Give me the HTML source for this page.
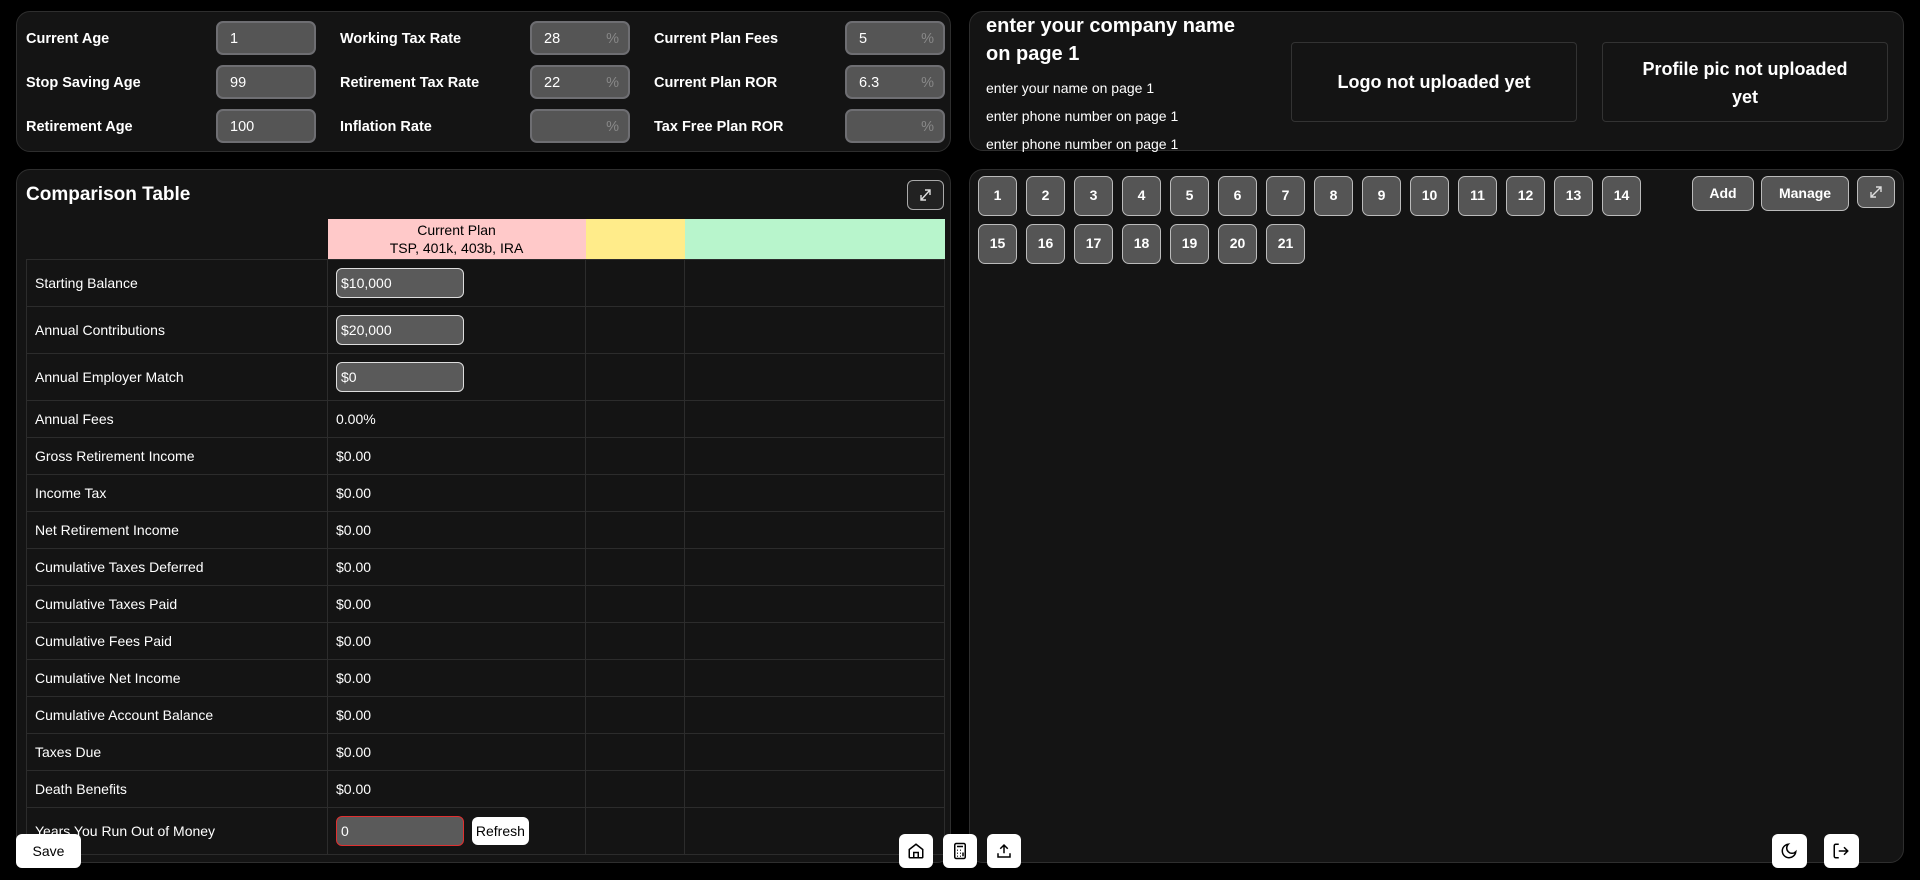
<!DOCTYPE html>
<html><head><meta charset="utf-8">
<style>
*{box-sizing:border-box;margin:0;padding:0}
html,body{width:1920px;height:880px;background:#000;overflow:hidden;font-family:"Liberation Sans",Arial,sans-serif;color:#fff}
.panel{position:absolute;background:#141414;border:1px solid #2e2e2e;border-radius:14px}
.lbl{position:absolute;font-size:14.5px;font-weight:bold}
.inp{position:absolute;width:100px;height:34px;background:#555;border:2px solid #6e6e72;border-radius:7px;font-size:14.5px;padding:8px 0 0 12px}
.inp .p{position:absolute;right:9px;top:8px;color:#888}
table{position:absolute;left:9px;top:49px;border-collapse:collapse;font-size:14px;table-layout:fixed;width:918px}
td{border:1px solid #2c2c2c;padding:0 0 0 8px;height:37px}
tr.tall td{height:47px}
.tin{width:128px;height:30px;background:#5a5a5a;border:1.5px solid #ddd;border-radius:6px;padding:6px 4px;font-size:14px}
.num{position:absolute;width:39px;height:40px;background:#555;border:1.5px solid #bbb;border-radius:7px;font-size:14px;font-weight:bold;text-align:center;line-height:37px}
.wb{position:absolute;background:#fff;border-radius:6px;color:#000}
.wb svg{position:absolute;left:8px;top:8px}
</style></head><body>

<div class="panel" style="left:16px;top:11px;width:935px;height:141px">
<div class="lbl" style="left:9px;top:19px">Current Age</div>
<div class="lbl" style="left:9px;top:63px">Stop Saving Age</div>
<div class="lbl" style="left:9px;top:107px">Retirement Age</div>
<div class="inp" style="left:199px;top:9px">1</div>
<div class="inp" style="left:199px;top:53px">99</div>
<div class="inp" style="left:199px;top:97px">100</div>
<div class="lbl" style="left:323px;top:19px">Working Tax Rate</div>
<div class="lbl" style="left:323px;top:63px">Retirement Tax Rate</div>
<div class="lbl" style="left:323px;top:107px">Inflation Rate</div>
<div class="inp" style="left:513px;top:9px">28<span class="p">%</span></div>
<div class="inp" style="left:513px;top:53px">22<span class="p">%</span></div>
<div class="inp" style="left:513px;top:97px"><span class="p">%</span></div>
<div class="lbl" style="left:637px;top:19px">Current Plan Fees</div>
<div class="lbl" style="left:637px;top:63px">Current Plan ROR</div>
<div class="lbl" style="left:637px;top:107px">Tax Free Plan ROR</div>
<div class="inp" style="left:828px;top:9px">5<span class="p">%</span></div>
<div class="inp" style="left:828px;top:53px">6.3<span class="p">%</span></div>
<div class="inp" style="left:828px;top:97px"><span class="p">%</span></div>
</div>

<div class="panel" style="left:969px;top:11px;width:935px;height:140px">
<div style="position:absolute;left:16px;top:0px;font-size:20px;font-weight:bold;line-height:28px;width:262px">enter your company name on page 1</div>
<div style="position:absolute;left:16px;top:62px;font-size:14px;line-height:28px">enter your name on page 1<br>enter phone number on page 1<br>enter phone number on page 1</div>
<div style="position:absolute;left:321px;top:30px;width:286px;height:80px;border:1px solid #333;border-radius:4px;font-size:18px;font-weight:bold;text-align:center;line-height:78px">Logo not uploaded yet</div>
<div style="position:absolute;left:632px;top:30px;width:286px;height:80px;border:1px solid #333;border-radius:4px;font-size:18px;font-weight:bold;text-align:center;line-height:28px;padding-top:12px">Profile pic not uploaded<br>yet</div>
</div>

<div class="panel" style="left:16px;top:169px;width:935px;height:694px">
<div style="position:absolute;left:9px;top:14px;font-size:19px;font-weight:bold">Comparison Table</div>
<div style="position:absolute;left:890px;top:10px;width:37px;height:30px;border:1.5px solid #aaa;border-radius:6px;background:#222">
<svg width="34" height="27" viewBox="0 0 34 27" style="position:absolute;left:0;top:0"><path d="M13 19L22 9M17 9h5v5M13 14v5h5" stroke="#ddd" stroke-width="1.4" fill="none"/></svg></div>
<table>
<colgroup><col style="width:301px"><col style="width:258px"><col style="width:99px"><col style="width:260px"></colgroup>
<tr><td style="border:none;border-bottom:1px solid #2c2c2c;height:40px"></td><td style="background:#ffc9c9;color:#000;text-align:center;padding:0;font-size:14px;line-height:18px;border:none">Current Plan<br>TSP, 401k, 403b, IRA</td><td style="background:#ffec8a;border:none"></td><td style="background:#b8f5cc;border:none"></td></tr>
<tr class="tall"><td>Starting Balance</td><td><div class="tin">$10,000</div></td><td></td><td></td></tr>
<tr class="tall"><td>Annual Contributions</td><td><div class="tin">$20,000</div></td><td></td><td></td></tr>
<tr class="tall"><td>Annual Employer Match</td><td><div class="tin">$0</div></td><td></td><td></td></tr>
<tr><td>Annual Fees</td><td>0.00%</td><td></td><td></td></tr>
<tr><td>Gross Retirement Income</td><td>$0.00</td><td></td><td></td></tr>
<tr><td>Income Tax</td><td>$0.00</td><td></td><td></td></tr>
<tr><td>Net Retirement Income</td><td>$0.00</td><td></td><td></td></tr>
<tr><td>Cumulative Taxes Deferred</td><td>$0.00</td><td></td><td></td></tr>
<tr><td>Cumulative Taxes Paid</td><td>$0.00</td><td></td><td></td></tr>
<tr><td>Cumulative Fees Paid</td><td>$0.00</td><td></td><td></td></tr>
<tr><td>Cumulative Net Income</td><td>$0.00</td><td></td><td></td></tr>
<tr><td>Cumulative Account Balance</td><td>$0.00</td><td></td><td></td></tr>
<tr><td>Taxes Due</td><td>$0.00</td><td></td><td></td></tr>
<tr><td>Death Benefits</td><td>$0.00</td><td></td><td></td></tr>
<tr class="tall"><td>Years You Run Out of Money</td><td><div class="tin" style="display:inline-block;border-color:#e03030;vertical-align:middle">0</div> <span style="display:inline-block;vertical-align:middle;background:#fff;color:#000;border-radius:6px;padding:6px 4px;margin-left:4px">Refresh</span></td><td></td><td></td></tr>
</table>
</div>

<div class="panel" style="left:969px;top:169px;width:935px;height:694px">
<div id="nums"></div>
<div class="num" style="left:722px;top:6px;width:62px;height:35px;line-height:32px">Add</div>
<div class="num" style="left:791px;top:6px;width:88px;height:35px;line-height:32px">Manage</div>
<div class="num" style="left:887px;top:6px;width:38px;height:32px">
<svg width="36" height="30" viewBox="0 0 36 30" style="position:absolute;left:0;top:0"><path d="M13 20L23 10M18 10h5v5M13 15v5h5" stroke="#ddd" stroke-width="1.4" fill="none"/></svg></div>
</div>

<div class="wb" style="left:16px;top:834px;width:65px;height:34px;font-size:14px;text-align:center;line-height:34px">Save</div>
<div class="wb" style="left:899px;top:834px;width:34px;height:34px"><svg width="18" height="18" viewBox="0 0 24 24" fill="none" stroke="#000" stroke-width="2"><path d="M3 10l9-7 9 7v10a1 1 0 0 1-1 1H4a1 1 0 0 1-1-1z"/><path d="M9 21v-7h6v7"/></svg></div>
<div class="wb" style="left:943px;top:834px;width:34px;height:34px"><svg width="18" height="18" viewBox="0 0 24 24" fill="none" stroke="#000" stroke-width="2"><rect x="5" y="2" width="14" height="20" rx="2"/><path d="M8 6h8M8 11h1M12 11h1M16 11h0M8 15h1M12 15h1M8 19h1M12 19h1M16 14v5"/></svg></div>
<div class="wb" style="left:987px;top:834px;width:34px;height:34px"><svg width="18" height="18" viewBox="0 0 24 24" fill="none" stroke="#000" stroke-width="2"><path d="M4 15v5h16v-5M12 15V4M7 9l5-5 5 5"/></svg></div>
<div class="wb" style="left:1772px;top:834px;width:35px;height:34px"><svg width="18" height="18" viewBox="0 0 24 24" fill="none" stroke="#000" stroke-width="2"><path d="M21 13A9 9 0 1 1 11 3a7 7 0 0 0 10 10z"/></svg></div>
<div class="wb" style="left:1824px;top:834px;width:35px;height:34px"><svg width="18" height="18" viewBox="0 0 24 24" fill="none" stroke="#000" stroke-width="2"><path d="M9 21H5a2 2 0 0 1-2-2V5a2 2 0 0 1 2-2h4M16 17l5-5-5-5M21 12H9"/></svg></div>

<script>
var h='';for(var i=1;i<=21;i++){var r=i<=14?0:1,c=i<=14?i-1:i-15;h+='<div class="num" style="left:'+(8+c*48)+'px;top:'+(6+r*48)+'px">'+i+'</div>';}
document.getElementById('nums').innerHTML=h;
</script>
</body></html>
